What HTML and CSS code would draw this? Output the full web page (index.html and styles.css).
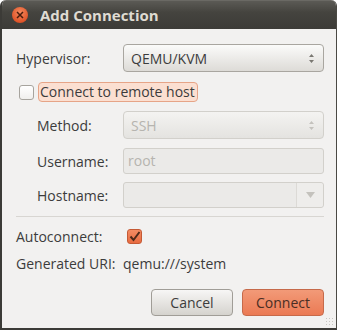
FILE: index.html
```html
<!DOCTYPE html>
<html lang="en">

<head>
    <meta charset="UTF-8">
    <title>Add Connection</title>
    <link rel="stylesheet" href="styles.css">
</head>

<body>
    <div class="window">
        <div class="titlebar">
            <span class="close">
                <svg width="8" height="8" viewBox="0 0 8 8"><path d="M1 1 L7 7 M7 1 L1 7" stroke="#4a1c0c" stroke-width="1.5"/></svg>
            </span>
            <span class="title">Add Connection</span>
        </div>

        <div class="content">
            <div class="row first">
                <span class="label">Hypervisor:</span>
                <div class="combo">
                    <span>QEMU/KVM</span>
                    <svg width="7" height="11" viewBox="0 0 7 11"><path d="M3.5 1 L6 4 H1 Z M3.5 10 L6 7 H1 Z" fill="#7a7872"/></svg>
                </div>
            </div>

            <div class="row remote">
                <span class="check"></span>
                <span class="focus">Connect to remote host</span>
            </div>

            <div class="row sub">
                <span class="label">Method:</span>
                <div class="combo off">
                    <span>SSH</span>
                    <svg width="7" height="11" viewBox="0 0 7 11"><path d="M3.5 1 L6 4 H1 Z M3.5 10 L6 7 H1 Z" fill="#c4c2bd"/></svg>
                </div>
            </div>

            <div class="row sub entryrow">
                <span class="label">Username:</span>
                <div class="entry">root</div>
            </div>

            <div class="row sub entryrow host">
                <span class="label">Hostname:</span>
                <div class="entry combo-entry">
                    <span class="field"></span>
                    <span class="drop">
                        <svg width="9" height="6" viewBox="0 0 9 6"><path d="M0 0 H9 L4.5 6 Z" fill="#c4c2bd"/></svg>
                    </span>
                </div>
            </div>

            <hr>

            <div class="row small">
                <span class="label">Autoconnect:</span>
                <span class="check on">
                    <svg width="12" height="11" viewBox="0 0 12 11"><path d="M1.5 5.5 L4.5 9 L10.5 1" fill="none" stroke="#4d2a1a" stroke-width="2"/></svg>
                </span>
            </div>

            <div class="row small uri">
                <span class="label">Generated URI:</span>
                <span>qemu:///system</span>
            </div>

            <div class="buttons">
                <button class="btn">Cancel</button>
                <button class="btn primary">Connect</button>
            </div>
        </div>
        <div class="grip"></div>
    </div>
</body></html>
```

FILE: styles.css
```css
body {
    margin: 0;
    background: #ffffff;
    font-family: "Open Sans", "DejaVu Sans", sans-serif;
    font-size: 14px;
    color: #3c3c3c;
}

.window {
    position: relative;
    width: 337px;
    height: 330px;
    box-sizing: border-box;
    border-left: 2px solid #3c3b37;
    border-right: 1px solid #4a4944;
    border-bottom: 2px solid #3c3b37;
    border-radius: 6px 6px 0 0;
    background: #f2f1f0;
    overflow: hidden;
}

.titlebar {
    height: 29px;
    margin-left: -2px;
    background: linear-gradient(#5b5a55, #45443f 40%, #3c3b37);
    border-top: 1px solid #6a6964;
    box-sizing: border-box;
    display: flex;
    align-items: center;
    padding-left: 12px;
}

.close {
    width: 16px;
    height: 16px;
    border-radius: 50%;
    background: radial-gradient(circle at 50% 35%, #f58a5e, #e0552a 70%, #b8441f);
    display: flex;
    align-items: center;
    justify-content: center;
}

.title {
    margin-left: 12px;
    font-weight: bold;
    font-size: 15px;
    color: #dfdbd2;
}

.content {
    padding: 15px 12px 0 14px;
}

.row {
    display: flex;
    align-items: center;
    height: 28px;
}

.label {
    width: 107px;
    flex: none;
}

.sub .label {
    width: 86px;
    padding-left: 21px;
}

.combo {
    flex: 1;
    height: 28px;
    box-sizing: border-box;
    border: 1px solid #a9a6a0;
    border-radius: 4px;
    background: linear-gradient(#fbfbfa, #dddbd7);
    display: flex;
    align-items: center;
    justify-content: space-between;
    padding: 0 8px 0 7px;
}

.combo.off {
    border-color: #d2d0cb;
    background: linear-gradient(#f4f3f1, #e4e3e0);
    color: #b6b4af;
}

.remote {
    margin-top: 10px;
    height: 20px;
}

.check {
    width: 13px;
    height: 13px;
    margin-left: 3px;
    border: 1px solid #a7a49e;
    border-radius: 3px;
    background: linear-gradient(#ffffff, #f0efed);
    flex: none;
}

.focus {
    margin-left: 4px;
    padding: 0 2px 0 1px;
    height: 20px;
    line-height: 18px;
    box-sizing: border-box;
    border: 1px solid #e6a487;
    border-radius: 4px;
    background: #fbdfd1;
}

.sub {
    margin-top: 9px;
}

.entryrow {
    height: 26px;
}

.entry {
    flex: 1;
    height: 26px;
    box-sizing: border-box;
    border: 1px solid #d2d0cb;
    border-radius: 3px;
    background: #ebeae8;
    color: #b6b4af;
    padding-left: 4px;
    line-height: 24px;
}

.host {
    margin-top: 8px;
}

.combo-entry {
    display: flex;
    padding: 0;
}

.field {
    flex: 1;
}

.drop {
    width: 26px;
    border-left: 1px solid #dcdad6;
    background: #eeedeb;
    border-radius: 0 3px 3px 0;
    display: flex;
    align-items: center;
    justify-content: center;
}

hr {
    margin: 8px 0 0 0;
    border: none;
    border-top: 1px solid #d8d6d2;
}

.small {
    height: 20px;
    margin-top: 9px;
}

.check.on {
    margin-left: 4px;
    border-color: #c55a35;
    background: linear-gradient(#f38c63, #e86b40);
    display: flex;
    align-items: center;
    justify-content: center;
}

.uri {
    margin-top: 7px;
}

.buttons {
    display: flex;
    justify-content: flex-end;
    gap: 9px;
    margin-top: 16px;
}

.btn {
    width: 82px;
    height: 27px;
    border: 1px solid #a09d97;
    border-radius: 4px;
    background: linear-gradient(#f7f6f5, #d5d3ce);
    font-family: "Open Sans", "DejaVu Sans", sans-serif;
    font-size: 14px;
    color: #3c3c3c;
}

.btn.primary {
    border-color: #c66a4a;
    background: linear-gradient(#f29a78, #eb7a54);
    color: #4a2e24;
}

.grip {
    position: absolute;
    right: 1px;
    bottom: 1px;
    width: 10px;
    height: 10px;
    background-image: radial-gradient(circle, #c8c6c1 0.8px, transparent 1px);
    background-size: 3px 3px;
}
```
